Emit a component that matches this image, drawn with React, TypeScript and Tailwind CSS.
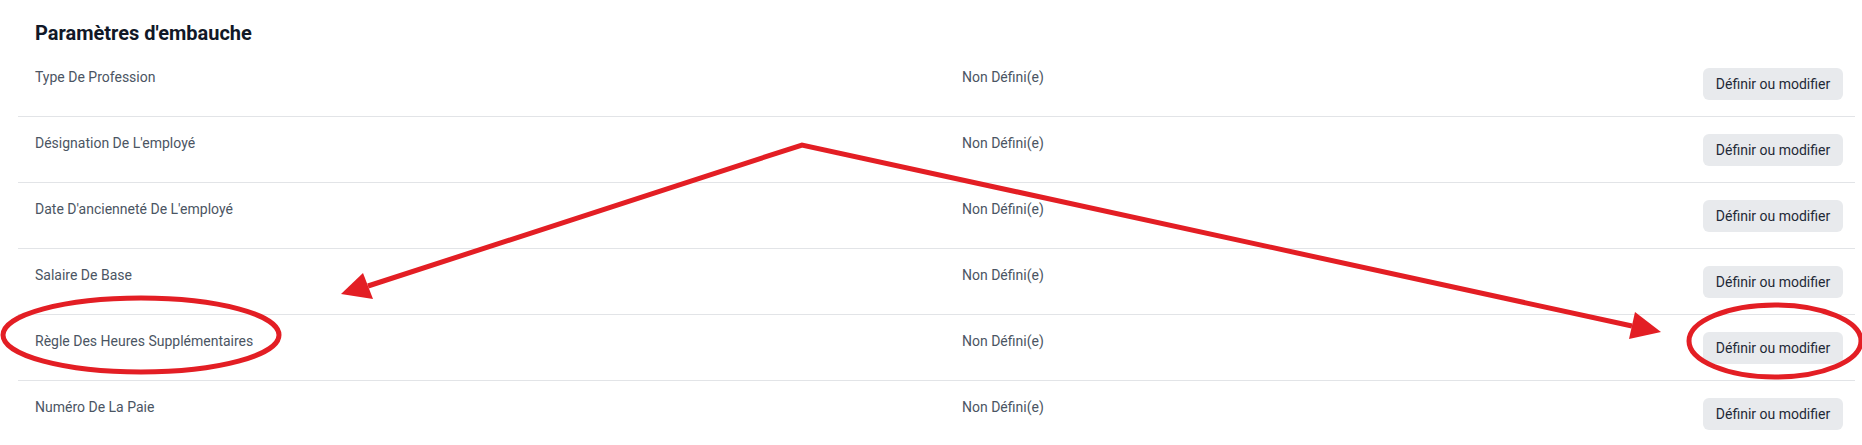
import React from 'react'

interface HiringSetting {
  id: string
  label: string
  value: string
}

const settings: HiringSetting[] = [
  { id: 'profession', label: 'Type De Profession', value: 'Non Défini(e)' },
  { id: 'designation', label: "Désignation De L'employé", value: 'Non Défini(e)' },
  { id: 'seniority', label: "Date D'ancienneté De L'employé", value: 'Non Défini(e)' },
  { id: 'salary', label: 'Salaire De Base', value: 'Non Défini(e)' },
  { id: 'overtime', label: 'Règle Des Heures Supplémentaires', value: 'Non Défini(e)' },
  { id: 'payroll', label: 'Numéro De La Paie', value: 'Non Défini(e)' },
]

function SettingRow({ setting, last }: { setting: HiringSetting; last: boolean }) {
  return (
    <div className={`flex items-start h-[66px] pl-[17px] pr-[12px] ${last ? '' : 'border-b border-[#e2e4e7]'}`}>
      <div className="w-[927px] pt-[16px] text-sm leading-5 text-[#4b5563]">{setting.label}</div>
      <div className="flex-1 pt-[16px] text-sm leading-5 text-[#4b5563]">{setting.value}</div>
      <button className="mt-[17px] w-[140px] h-[32px] rounded-md bg-[#e8eaed] text-sm text-[#1f2937] hover:bg-gray-300">
        Définir ou modifier
      </button>
    </div>
  )
}

// red annotation marks drawn on top of the screenshot
function Annotations() {
  return (
    <svg
      className="absolute inset-0 pointer-events-none"
      width="1862"
      height="445"
      viewBox="0 0 1862 445"
    >
      <g stroke="#e31e24" strokeWidth="5" fill="none" strokeLinejoin="miter">
        <polyline points="368,286 802,145 1632,326" />
        <ellipse cx="141" cy="335" rx="138" ry="37" />
        <ellipse cx="1775" cy="341" rx="86" ry="36" />
      </g>
      <g fill="#e31e24">
        <polygon points="341,294 363,273 373,299" />
        <polygon points="1661,332 1635,312 1629,339" />
      </g>
    </svg>
  )
}

export default function App() {
  return (
    <div className="relative w-[1862px] h-[445px] overflow-hidden bg-white font-['Roboto',sans-serif]">
      <div className="pl-[18px] pr-[7px] pt-[19px]">
        <h2 className="pl-[17px] text-[20px] leading-7 font-bold text-[#111827]">Paramètres d'embauche</h2>
        <div className="mt-[4px]">
          {settings.map((s, i) => (
            <SettingRow key={s.id} setting={s} last={i === settings.length - 1} />
          ))}
        </div>
      </div>
      <Annotations />
    </div>
  )
}
